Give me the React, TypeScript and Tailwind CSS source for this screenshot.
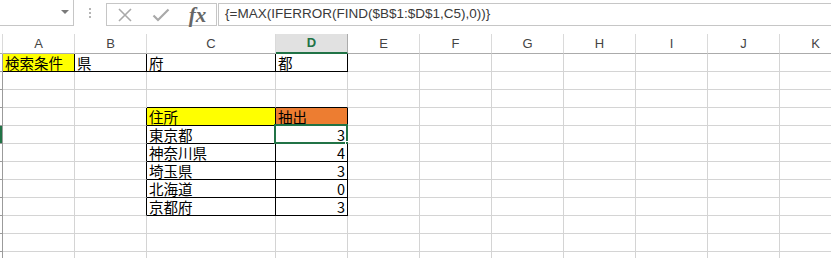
import React from "react";

const LETTERS = ["", "A", "B", "C", "D", "E", "F", "G", "H", "I", "J", "K"];

type CellData = { text: string; bg?: string; align?: "right" };

const DATA: Record<string, CellData> = {
  "1-1": { text: "検索条件", bg: "bg-[#ffff00]" },
  "1-2": { text: "県" },
  "1-3": { text: "府" },
  "1-4": { text: "都" },
  "4-3": { text: "住所", bg: "bg-[#ffff00]" },
  "4-4": { text: "抽出", bg: "bg-[#ed7d31]" },
  "5-3": { text: "東京都" },
  "5-4": { text: "3", align: "right" },
  "6-3": { text: "神奈川県" },
  "6-4": { text: "4", align: "right" },
  "7-3": { text: "埼玉県" },
  "7-4": { text: "3", align: "right" },
  "8-3": { text: "北海道" },
  "8-4": { text: "0", align: "right" },
  "9-3": { text: "京都府" },
  "9-4": { text: "3", align: "right" },
};

function inTable(r: number, c: number) {
  return (r === 1 && c >= 1 && c <= 4) || (r >= 4 && r <= 9 && c >= 3 && c <= 4);
}

function Toolbar() {
  return (
    <div className="flex h-[34px] items-start">
      {/* name box */}
      <div className="flex h-[26px] w-[74px] items-center justify-end border-b border-r border-[#c6c6c6] pr-[4px]">
        <svg width="8" height="5" viewBox="0 0 8 5">
          <path d="M0 0h8L4 4z" fill="#7a7a7a" />
        </svg>
      </div>
      <div className="flex h-[26px] w-[32px] flex-col items-center justify-center gap-[2px]">
        <span className="h-[2px] w-[2px] bg-[#b5b5b5]" />
        <span className="h-[2px] w-[2px] bg-[#b5b5b5]" />
        <span className="h-[2px] w-[2px] bg-[#b5b5b5]" />
      </div>
      {/* buttons */}
      <div className="mt-[3px] flex h-[23px] w-[111px] items-center border border-[#c6c6c6] bg-white">
        <div className="flex w-[36px] justify-center">
          <svg width="16" height="16" viewBox="0 0 16 16">
            <path d="M2 2L14 14M14 2L2 14" stroke="#a9a9a9" strokeWidth="1.6" />
          </svg>
        </div>
        <div className="flex w-[36px] justify-center">
          <svg width="18" height="16" viewBox="0 0 18 16">
            <path d="M1.5 8.5L6 13L16.5 2.5" stroke="#a9a9a9" strokeWidth="2.2" fill="none" />
          </svg>
        </div>
        <div className="flex w-[37px] justify-center font-['Liberation_Serif',serif] text-[21px] font-bold leading-[20px] italic text-[#666]">
          fx
        </div>
      </div>
      {/* formula */}
      <div className="ml-[1px] mt-[3px] flex h-[23px] flex-1 items-center border border-r-0 border-[#c6c6c6] pl-[6px] font-['Liberation_Sans',sans-serif] text-[13.5px] text-[#3a3a3a]">
        {"{=MAX(IFERROR(FIND($B$1:$D$1,C5),0))}"}
      </div>
    </div>
  );
}

function Grid() {
  const rows = Array.from({ length: 12 }, (_, i) => i + 1);
  return (
    <div className="grid grid-cols-[3px_72px_72px_129px_72px_72px_72px_72px_72px_72px_72px_72px] grid-rows-[20px_repeat(12,18px)]">
      {LETTERS.map((l, c) => (
        <div
          key={"h" + c}
          className={
            c === 4
              ? "flex items-center justify-center border-b-2 border-r border-b-[#217346] border-r-[#ababab] bg-[#e1e1e1] font-['Liberation_Sans',sans-serif] text-[13px] font-bold text-[#217346]"
              : "flex items-center justify-center border-b border-r border-b-[#ababab] border-r-[#dadada] font-['Liberation_Sans',sans-serif] text-[13px] text-[#444]"
          }
        >
          {l}
        </div>
      ))}
      {rows.map((r) =>
        LETTERS.map((_, c) => {
          if (c === 0) {
            return (
              <div
                key={r + "-0"}
                className={
                  r === 5
                    ? "border-b border-r border-[#9b9b9b] bg-[#217346]"
                    : "border-b border-r border-[#9b9b9b] bg-white"
                }
              />
            );
          }
          const d = DATA[r + "-" + c];
          const bottom = inTable(r, c) || inTable(r + 1, c);
          const right = inTable(r, c) || inTable(r, c + 1);
          return (
            <div
              key={r + "-" + c}
              className={[
                "relative overflow-visible whitespace-nowrap border-b border-r px-[2px] pt-[1px] font-['Noto_Sans_CJK_JP',sans-serif] text-[14.5px] leading-[16px] text-black",
                bottom ? "border-b-black" : "border-b-[#d4d4d4]",
                right ? "border-r-black" : "border-r-[#d4d4d4]",
                d?.bg ?? "bg-white",
                d?.align === "right" ? "text-right" : "text-left",
              ].join(" ")}
            >
              {d?.text}
              {r === 5 && c === 4 && (
                <>
                  <div className="pointer-events-none absolute -left-[2px] -top-[2px] -right-[1px] -bottom-[1px] border-2 border-[#217346]" />
                  <div className="absolute -bottom-[4px] -right-[4px] h-[6px] w-[6px] border border-white bg-[#217346]" />
                </>
              )}
            </div>
          );
        })
      )}
    </div>
  );
}

export default function App() {
  return (
    <div className="h-[258px] w-[831px] overflow-hidden bg-white">
      <Toolbar />
      <Grid />
    </div>
  );
}
